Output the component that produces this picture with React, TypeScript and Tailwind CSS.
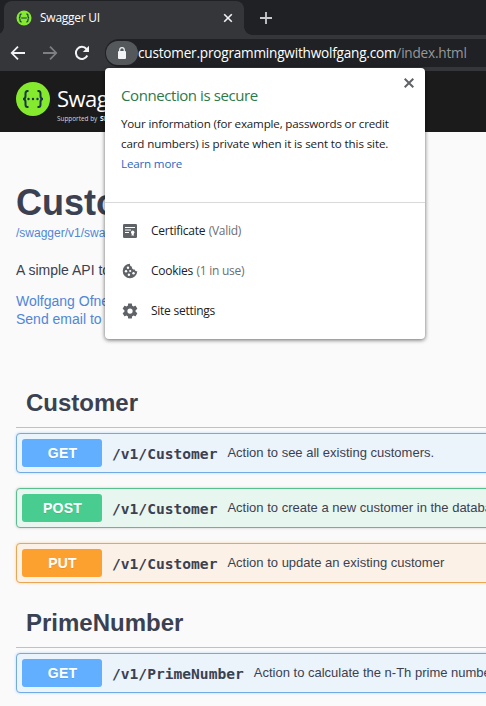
import React from "react";

type Method = "GET" | "POST" | "PUT";

const tones: Record<Method, { box: string; badge: string }> = {
  GET: {
    box: "border-[#72abe4] bg-[#ebf3fb] shadow-[0_0_3px_rgba(97,175,254,0.45)]",
    badge: "bg-[#61affe]",
  },
  POST: {
    box: "border-[#58c08f] bg-[#e8f6f0] shadow-[0_0_3px_rgba(0,0,0,0.19)]",
    badge: "bg-[#49cc90]",
  },
  PUT: {
    box: "border-[#e9a654] bg-[#fbf1e6] shadow-[0_0_3px_rgba(252,161,48,0.45)]",
    badge: "bg-[#fca130]",
  },
};

function Operation({ method, path, text }: { method: Method; path: string; text: string }) {
  const tone = tones[method];
  return (
    <div className={`mb-[15px] flex h-10 w-[700px] items-center rounded-[4px] border px-[5px] ${tone.box}`}>
      <span
        className={`flex h-7 w-20 shrink-0 items-center justify-center rounded-[3px] pl-px text-sm font-bold tracking-[0.2px] text-white [text-shadow:0_1px_0_rgba(0,0,0,0.1)] ${tone.badge}`}
      >
        {method}
      </span>
      <span className="relative top-px ml-[10px] font-['DejaVu_Sans_Mono',monospace] text-[14.6px] font-bold">{path}</span>
      <span className="ml-[10px] whitespace-nowrap text-[13px]">{text}</span>
    </div>
  );
}

function TagHeader({ children }: { children: React.ReactNode }) {
  return (
    <h2 className="mb-[5px] flex h-[50px] items-center border-b border-[#c0c1c3] px-[10px] text-2xl font-bold">
      {children}
    </h2>
  );
}

function TabStrip() {
  return (
    <div className="flex h-[35px] bg-[#202124] text-white">
      <div className="flex w-1 items-end">
        <div className="h-2 w-1 bg-[radial-gradient(circle_at_-4px_0px,#202124_7.5px,#35363a_8px)]" />
      </div>
      <div className="mt-px flex w-60 items-center rounded-t-lg bg-[#35363a] pl-3 pr-[11px]">
        <svg width="16" height="16" viewBox="0 0 34 34">
          <circle cx="17" cy="17" r="16" fill="#85ea2d" />
          <path
            d="M12 9H10.500Q8.500 9 8.500 12V14Q8.500 17 6 17Q8.500 17 8.500 20V22Q8.500 25 10.500 25H12M22 9H23.500Q25.500 9 25.500 12V14Q25.500 17 28 17Q25.500 17 25.500 20V22Q25.500 25 23.500 25H22M11 17H23"
            fill="none"
            stroke="#173647"
            strokeWidth="2.600"
          />
        </svg>
        <span className="ml-2 flex-1 text-[12px] tracking-[-0.25px]">Swagger UI</span>
        <svg width="10" height="10" viewBox="0 0 10 10" stroke="#f1f3f4" strokeWidth="1.600">
          <path d="M1.200 1.200 8.800 8.800M8.800 1.200 1.200 8.800" />
        </svg>
      </div>
      <div className="flex w-2 items-end">
        <div className="h-2 w-2 bg-[radial-gradient(circle_at_8px_0px,#202124_7.5px,#35363a_8px)]" />
      </div>
      <svg className="ml-2 mt-3" width="12" height="12" viewBox="0 0 12 12" stroke="#c9cacc" strokeWidth="1.800">
        <path d="M6 0V12M0 6H12" />
      </svg>
    </div>
  );
}

function Toolbar() {
  return (
    <div className="flex h-9 items-center bg-[#35363a] pl-[10px]">
      <svg className="shrink-0" width="16" height="16" viewBox="0 0 24 24" fill="#f1f3f4">
        <path d="M22.500 10.600H5.800l7.100-7.100L11 1.600 0.800 12 11 22.400l1.900-1.900-7.100-7.100H22.500z" />
      </svg>
      <svg className="ml-4 shrink-0" width="16" height="16" viewBox="0 0 24 24" fill="#7e7f82">
        <path d="M1.500 10.600h16.700l-7.100-7.100L13 1.600 23.200 12 13 22.400l-1.900-1.900 7.100-7.100H1.500z" />
      </svg>
      <svg className="ml-4 shrink-0" width="16" height="16" viewBox="0 0 16 16">
        <path d="M13.300 10.500A6 6 0 1 1 12.500 4" fill="none" stroke="#f1f3f4" strokeWidth="2" />
        <path d="M15 0.800V7H8.800z" fill="#f1f3f4" />
      </svg>
      <div className="ml-[15px] flex h-7 w-[420px] shrink-0 items-center rounded-l-full bg-[#202124] pl-px">
        <div className="flex h-6 w-8 shrink-0 items-center justify-center rounded-full bg-[#55585b]">
          <svg width="10" height="12" viewBox="0 0 10 12">
            <rect x="1" y="4" width="8" height="8" rx="1" fill="#f1f3f4" />
            <path d="M2.700 5V3a2.300 2.300 0 0 1 4.600 0V5" fill="none" stroke="#f1f3f4" strokeWidth="1.200" />
          </svg>
        </div>
        <span className="whitespace-nowrap text-[13.6px] tracking-[-0.21px] text-white">
          customer.programmingwithwolfgang.com<span className="text-[#96989b]">/index.html</span>
        </span>
      </div>
    </div>
  );
}

function SwaggerBar() {
  return (
    <div className="flex h-[61px] items-start bg-[#1b1b1b] pl-4 pt-[11px] text-white">
      <svg width="34" height="34" viewBox="0 0 34 34">
        <circle cx="17" cy="17" r="17" fill="#85ea2d" />
        <path
          d="M12.500 9H11.500Q9.500 9 9.500 11.500V14Q9.500 17 7 17Q9.500 17 9.500 20V22.500Q9.500 25 11.500 25H12.500M21.500 9H22.500Q24.500 9 24.500 11.500V14Q24.500 17 27 17Q24.500 17 24.500 20V22.500Q24.500 25 22.500 25H21.500"
          fill="none"
          stroke="#173647"
          strokeWidth="2"
        />
        <path d="M12.500 17h.01M17 17h.01M21.500 17h.01" stroke="#173647" strokeWidth="2.400" strokeLinecap="round" />
      </svg>
      <div className="ml-[7px] flex flex-col pt-[3px]">
        <span className="text-[22px] leading-[27px] tracking-[-0.5px]">Swagger</span>
        <span className="mt-[2px] text-[6.4px] leading-[10px] text-[#d8d8d8]">
          Supported by <b className="ml-px text-[7px] text-white">SMARTBEAR</b>
        </span>
      </div>
    </div>
  );
}

function CertificateIcon() {
  return (
    <svg width="14" height="14" viewBox="0 0 14 14">
      <rect width="14" height="14" rx="1.300" fill="#5f6368" />
      <path d="M2 3.500H12M2 6H8M2 8.500H6" stroke="#fff" strokeWidth="1.200" />
      <circle cx="9.700" cy="8.200" r="1.700" fill="#fff" />
      <path d="M8.700 9H10.700V12L9.700 11.300 8.700 12z" fill="#fff" />
    </svg>
  );
}

function CookieIcon() {
  return (
    <svg width="16" height="16" viewBox="0 0 16 16">
      <path
        d="M8 .7A7.300 7.300 0 1 0 15.300 8.300C14 8.600 12.900 7.900 12.700 6.600 10.900 6.700 9.600 5.400 9.900 3.700 8.500 3.400 7.700 2.200 8 .7z"
        fill="#5f6368"
      />
      <g fill="#fff">
        <circle cx="6" cy="4.700" r="1.200" />
        <circle cx="4" cy="8.300" r="1.200" />
        <circle cx="8.200" cy="8" r="1.100" />
        <circle cx="6.900" cy="11.800" r="1.200" />
        <circle cx="11.500" cy="10.300" r="1.200" />
      </g>
    </svg>
  );
}

function GearIcon() {
  return (
    <svg width="18" height="18" viewBox="0 0 24 24" fill="#5f6368">
      <path d="M19.430 12.980c.040-.320.070-.640.070-.980s-.030-.660-.070-.980l2.110-1.650c.190-.150.240-.420.120-.640l-2-3.460c-.120-.220-.390-.300-.610-.220l-2.490 1c-.520-.400-1.080-.730-1.690-.980l-.380-2.650C14.460 2.180 14.250 2 14 2h-4c-.250 0-.460.180-.490.420l-.380 2.650c-.610.250-1.170.590-1.690.980l-2.490-1c-.230-.090-.490 0-.610.220l-2 3.460c-.130.220-.070.490.120.640l2.110 1.650c-.040.320-.070.650-.070.980s.030.660.070.980l-2.110 1.650c-.190.150-.240.420-.120.640l2 3.460c.120.220.390.300.610.220l2.490-1c.520.400 1.080.730 1.690.980l.380 2.650c.030.240.240.420.490.420h4c.250 0 .460-.180.490-.420l.380-2.650c.610-.250 1.170-.590 1.690-.980l2.490 1c.230.090.490 0 .610-.220l2-3.460c.120-.220.070-.490-.120-.640zM12 15.500A3.500 3.500 0 1 1 12 8.500a3.500 3.500 0 0 1 0 7z" />
    </svg>
  );
}

function MenuRow({ icon, label, note }: { icon: React.ReactNode; label: string; note?: string }) {
  return (
    <div className="flex h-10 items-center pl-4 text-[12px] tracking-[-0.26px]">
      <span className="flex w-[18px] justify-center">{icon}</span>
      <span className="ml-3">{label}</span>
      {note && <span className="ml-[3.5px] text-[#6b6e73]">{note}</span>}
    </div>
  );
}

function SecurityPopover() {
  return (
    <div className="absolute left-[105px] top-[68px] h-[271px] w-80 rounded-[4px] bg-white font-['Open_Sans','Noto_Sans',sans-serif] text-[#202124] shadow-[0_1px_4px_rgba(0,0,0,0.6)]">
      <svg className="absolute right-[11px] top-[10px]" width="10" height="10" viewBox="0 0 10 10" stroke="#5f6368" strokeWidth="2">
        <path d="M.7.7 9.300 9.300M9.300.7.7 9.300" />
      </svg>
      <div className="h-[135px] border-b border-[#d8d9db] px-4 pt-[16px]">
        <h1 className="text-[15px] leading-[22px] tracking-[-0.42px] text-[#2c7a48]">Connection is secure</h1>
        <p className="mt-[8px] whitespace-nowrap text-[11.6px] leading-5 tracking-[-0.17px]">
          Your information (for example, passwords or credit
          <br />
          <span className="tracking-[-0.12px]">card numbers) is private when it is sent to this site.</span>
          <br />
          <a className="text-[#2b68c5]">Learn more</a>
        </p>
      </div>
      <div className="pt-2">
        <MenuRow icon={<CertificateIcon />} label="Certificate" note="(Valid)" />
        <MenuRow icon={<CookieIcon />} label="Cookies" note="(1 in use)" />
        <MenuRow icon={<GearIcon />} label="Site settings" />
      </div>
    </div>
  );
}

export default function App() {
  return (
    <div className="relative h-[706px] w-[486px] overflow-hidden bg-[#fafafa] font-['Liberation_Sans',Arial,sans-serif] text-[#3b4151]">
      <header className="font-['Open_Sans','Noto_Sans',sans-serif]">
        <TabStrip />
        <Toolbar />
        <SwaggerBar />
      </header>
      <main className="pl-4">
        <div className="h-[246px] whitespace-nowrap pt-[51px]">
          <h1 className="text-4xl font-bold leading-[40px]">Customer</h1>
          <a className="mt-[2px] block text-xs leading-4 text-[#4f86d9]">/swagger/v1/swagger.json</a>
          <p className="mt-[20px] text-sm leading-[18px]">A simple API to</p>
          <div className="mt-[13px] text-sm leading-[18px] text-[#4f86d9]">
            <a className="block">Wolfgang Ofner</a>
            <a className="block">Send email to</a>
          </div>
        </div>
        <TagHeader>Customer</TagHeader>
        <Operation method="GET" path="/v1/Customer" text="Action to see all existing customers." />
        <Operation method="POST" path="/v1/Customer" text="Action to create a new customer in the database." />
        <Operation method="PUT" path="/v1/Customer" text="Action to update an existing customer" />
        <TagHeader>PrimeNumber</TagHeader>
        <Operation method="GET" path="/v1/PrimeNumber" text="Action to calculate the n-Th prime number." />
      </main>
      <SecurityPopover />
    </div>
  );
}
